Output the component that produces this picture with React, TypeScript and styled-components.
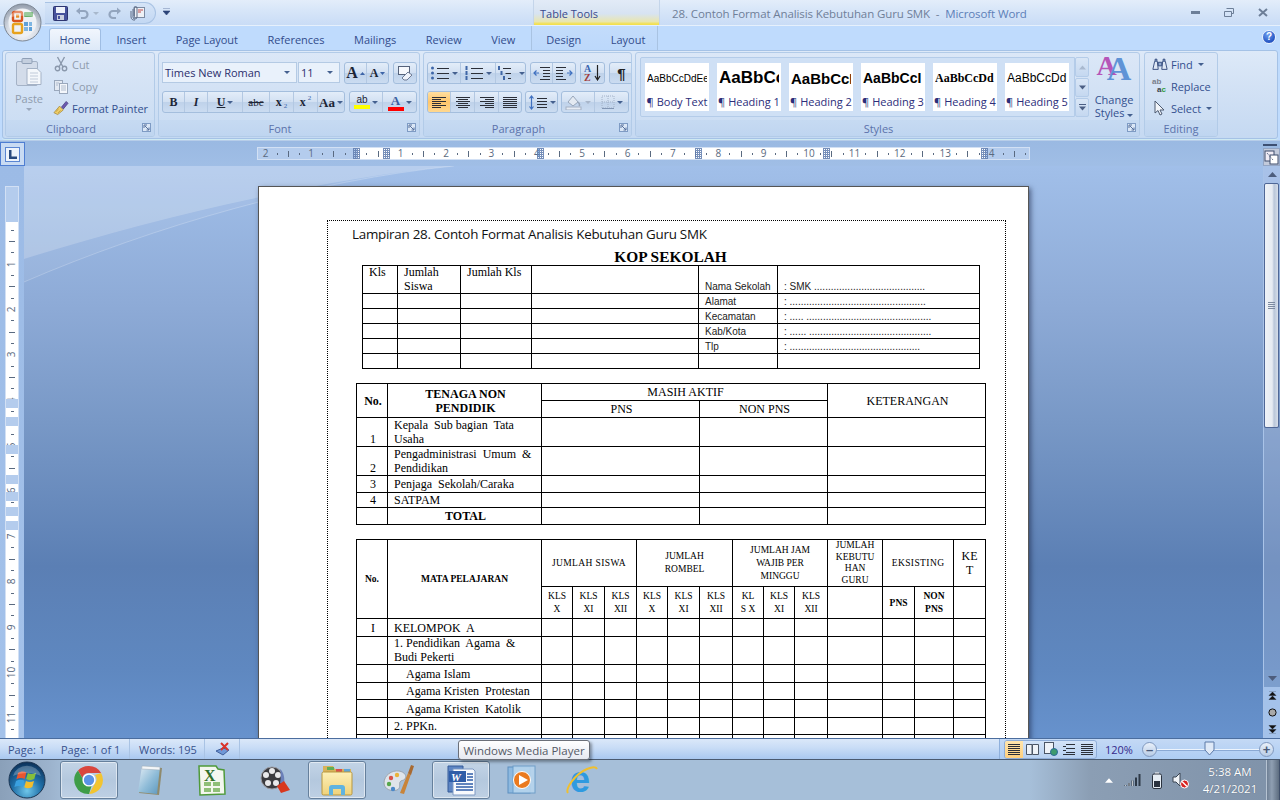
import React from "react";
import styled, { createGlobalStyle } from "styled-components";

const Global = createGlobalStyle`
  html, body { margin: 0; padding: 0; height: 100%; overflow: hidden; background: #a6bfd9; }
  #root { height: 100%; }
  * { box-sizing: border-box; }
`;

const UI = `"Open Sans", "Noto Sans", sans-serif`;
const SERIF = `"Liberation Serif", serif`;
const SANS = `"Liberation Sans", sans-serif`;

const Window = styled.div`
  position: relative; width: 1280px; height: 800px; overflow: hidden;
  display: flex; flex-direction: column; font-family: ${UI}; font-size: 11px; color: #2f4c8a;
`;

/* ---------- title bar ---------- */
const TitleBar = styled.div`
  height: 26px; flex: none; display: flex; align-items: stretch; padding-left: 45px;
  background: linear-gradient(#e3edfa, #d6e5f8 45%, #c9dcf6);
  border-bottom: 1px solid #e6f0fc;
`;
const Qat = styled.div`
  width: 111px; height: 22px; margin-top: 2px; padding-left: 8px; display: flex; align-items: center;
  background: linear-gradient(#d5e4f7, #c3d8f3); border: 1px solid #a9c3e4; border-left: 0; border-radius: 0 12px 12px 0;
`;
const Gap = styled.span<{ $w: number }>`width: ${(p) => p.$w}px; flex: none;`;
const QatMenu = styled.div`width: 14px; margin-left: 3px; padding-top: 8px; display: flex; justify-content: center;`;
const CtxHead = styled.div`
  width: 127px; margin-left: 360px; padding: 7px 0 0 6px; font-size: 11px; line-height: 14px; color: #3a4a8c;
  background: linear-gradient(#e2ebf7, #d7e3f2 55%, #e9e6b0 86%, #f3e04f 96%);
  border-left: 1px solid #c4d5ea; border-right: 1px solid #c4d5ea;
`;
const DocTitle = styled.div`
  margin-left: 12px; padding-top: 6px; font-size: 11.5px; line-height: 15px; color: #6f7f98; white-space: pre; letter-spacing: -0.1px;
`;
const AppName = styled.span`color: #5d7fb7;`;
const WinControls = styled.div`margin-left: auto; display: flex; align-items: flex-start;`;
const WinBtn = styled.div`width: 34px; height: 24px; display: flex; align-items: center; justify-content: center;`;

/* ---------- tabs ---------- */
const TabRow = styled.div`
  height: 24px; flex: none; display: flex; align-items: stretch; padding-left: 49px; background: #bfdbfd; position: relative;
`;
const Tab = styled.div<{ $active?: boolean }>`
  display: flex; align-items: center; justify-content: center; height: 22px; margin-top: 2px; white-space: nowrap; font-size: 11px; color: #324c8c;
  padding: ${(p) => (p.$active ? "0" : "0 14px")}; width: ${(p) => (p.$active ? "52px" : "auto")};
  margin-left: ${(p) => (p.$active ? "0" : "1.5px")};
  ${(p) => p.$active && `background: linear-gradient(#f1f6fd, #dde9f8); border: 1px solid #9fbde3; border-bottom: 0; border-radius: 3px 3px 0 0;`}
`;
const CtxTabs = styled.div`
  width: 127px; margin-left: 2px; display: flex; background: linear-gradient(#c3dcfb, #bcd8fb);
  border-left: 1px solid #a9c3e2; border-right: 1px solid #a9c3e2;
  & > div:first-child { margin-left: 0; }
`;
const Help = styled.div`
  position: absolute; right: 4px; top: 4px; width: 14px; height: 14px; border-radius: 50%;
  background: radial-gradient(circle at 40% 30%, #6f9ff0, #1f4fbf 75%); border: 1px solid #e8f0fc;
  color: #fff; font: bold 10px/12px ${SANS}; text-align: center;
`;

/* ---------- ribbon ---------- */
const Ribbon = styled.div`
  height: 90px; flex: none; padding: 0 2px 1px 2px; background: #bfdbfd;
`;
const RibbonPanel = styled.div`
  height: 89px; padding: 1px 2px; display: flex; gap: 3px; border: 1px solid #a5c2e6; border-radius: 3px;
  background: linear-gradient(#dde9f8, #d3e2f5 40%, #c5d9f2);
  box-shadow: 0 1px 0 #cfeaf2;
`;
const Group = styled.div<{ $w: number; $ml?: number }>`
  width: ${(p) => p.$w}px; flex: none; display: flex; flex-direction: column; border: 1px solid #b2cbe8; border-radius: 3px; overflow: hidden;
  margin-left: ${(p) => p.$ml ?? 0}px;
  background: linear-gradient(#dbe7f7, #d0e0f4 60%, #c9dcf3);
`;
const GroupBody = styled.div`
  flex: 1; position: relative; display: flex; min-height: 0;
`;
const GroupLabel = styled.div<{ $launch?: boolean }>`
  height: 16px; flex: none; position: relative; text-align: center; font-size: 11px; line-height: 15px; padding-top: 1px; color: #5b72ab; background: linear-gradient(#c6daf2, #bfd5f0);
  padding-right: ${(p) => (p.$launch ? "18px" : "0")};
`;
const Launcher = styled.svg`position: absolute; right: 3px; top: 3px; width: 9px; height: 9px;`;
const Stack = styled.div<{ $gap?: number; $pt?: number; $pl?: number }>`
  display: flex; flex-direction: column; gap: ${(p) => p.$gap ?? 0}px; padding-top: ${(p) => p.$pt ?? 0}px; padding-left: ${(p) => p.$pl ?? 0}px;
`;
const Row = styled.div<{ $gap?: number }>`display: flex; align-items: stretch; gap: ${(p) => p.$gap ?? 0}px;`;

const PasteBtn = styled.div`
  width: 46px; padding-top: 4px; display: flex; flex-direction: column; align-items: center; color: #8f9cae; font-size: 11px; line-height: 14px;
`;
const PasteLabel = styled.span`margin-top: 5px;`;
const PasteCaret = styled.span`margin-top: 2px; display: flex;`;
const SmallCmd = styled.div<{ $off?: boolean }>`
  height: 22px; display: flex; align-items: center; gap: 3px; white-space: nowrap; font-size: 11px; letter-spacing: -0.05px; color: ${(p) => (p.$off ? "#8f9cae" : "#34508f")};
`;
const CmdIcon = styled.span`width: 16px; height: 16px; display: flex; align-items: center; justify-content: center; flex: none;`;
const Caret = styled.i<{ $c?: string; $ml?: number }>`
  display: inline-block; width: 0; height: 0; flex: none; border-left: 3px solid transparent; border-right: 3px solid transparent; border-top: 3px solid ${(p) => p.$c || "#44608f"};
  margin-left: ${(p) => p.$ml ?? 0}px;
`;

const Strip = styled.div`
  height: 22px; display: flex; align-items: stretch; border: 1px solid #a4bedd; border-radius: 3px;
  background: linear-gradient(#e3edf9, #d2e0f2 48%, #bfd2ea 52%, #cbdcf1);
`;
const StripBtn = styled.div<{ $w: number; $on?: boolean }>`
  width: ${(p) => p.$w}px; flex: none; display: flex; align-items: center; justify-content: center; gap: 2px; color: #1f2a3e;
  border-right: 1px solid #b3c8e2; white-space: nowrap;
  &:last-child { border-right: 0; }
  ${(p) => p.$on && `background: linear-gradient(#ffdfa0, #ffc66b 50%, #ffd890); border-radius: 2px 0 0 2px;`}
`;
const FontBox = styled.div<{ $w: number }>`
  width: ${(p) => p.$w}px; height: 21px; display: flex; align-items: center; justify-content: space-between; padding: 0 6px 0 2px;
  background: #e9f1fb; border: 1px solid #b4cae4; font-size: 11px; color: #2b2f6c; white-space: nowrap;
`;
const Fx = styled.span<{ $size: number; $bold?: boolean; $italic?: boolean; $u?: boolean; $s?: boolean; $c?: string; $sans?: boolean; $dy?: number }>`
  font-family: ${(p) => (p.$sans ? SANS : SERIF)}; font-size: ${(p) => p.$size}px; line-height: 1; color: ${(p) => p.$c || "#1c2536"};
  font-weight: ${(p) => (p.$bold ? 700 : 400)}; font-style: ${(p) => (p.$italic ? "italic" : "normal")};
  text-decoration: ${(p) => (p.$u ? "underline" : p.$s ? "line-through" : "none")};
  transform: translateY(${(p) => p.$dy ?? 0}px);
`;
const FontColor = styled.span<{ $c: string }>`
  display: flex; flex-direction: column; align-items: center; line-height: 10px;
  &::after { content: ""; width: 16px; height: 4px; background: ${(p) => p.$c}; margin-top: 0; }
`;

const Gallery = styled.div`
  margin: 4px 0 0 4px; width: 435px; height: 60px; padding: 5px 4px; display: flex; gap: 8px;
  border: 1px solid #b4cce9; border-radius: 2px 0 0 2px; background: #cfe0f5;
`;
const Swatch = styled.div`
  width: 64px; height: 48px; flex: none; background: #fff; display: flex; flex-direction: column; align-items: center; overflow: hidden;
`;
const Sample = styled.div<{ $size: number; $bold?: boolean; $serif?: boolean }>`
  height: 30px; width: 60px; overflow: hidden; white-space: nowrap; color: #000; text-align: left; display: flex; align-items: center;
  font-family: ${(p) => (p.$serif ? SERIF : SANS)}; font-size: ${(p) => p.$size}px; font-weight: ${(p) => (p.$bold ? 700 : 400)};
`;
const SwatchName = styled.div`font-size: 11px; line-height: 18px; white-space: nowrap; color: #2c2e7a;`;
const GalleryArrows = styled.div`margin-top: 4px; width: 14px; height: 60px; display: flex; flex-direction: column; gap: 1px;`;
const GalleryArrow = styled.div<{ $h: number }>`
  height: ${(p) => p.$h}px; display: flex; align-items: center; justify-content: center; flex-direction: column; gap: 1px;
  background: linear-gradient(#d9e6f6, #c5d8f0); border: 1px solid #b4cce9; border-radius: 2px;
`;
const BarMark = styled.i`display: block; width: 7px; height: 1px; background: #4c5f84;`;
const ChangeStyles = styled.div`
  width: 50px; display: flex; flex-direction: column; align-items: center; font-size: 11px; line-height: 13px; color: #34508f; text-align: center;
`;
const ChangeLabel = styled.span`margin-top: 10px; white-space: nowrap;`;
const BigA = styled.div`
  height: 30px; padding-top: 2px; display: flex; align-items: flex-end; font-family: ${SERIF}; font-weight: 700;
  span:first-child { color: #b655b8; font-size: 28px; line-height: 26px; margin-bottom: 4px; }
  span:last-child { color: #5f93d6; font-size: 34px; line-height: 28px; margin-left: -10px; }
`;

/* ---------- rulers ---------- */
const RulerRow = styled.div`
  height: 26px; flex: none; position: relative; display: flex; align-items: flex-start; background: linear-gradient(#9ab9e2, #a0bee6);
  border-top: 1px solid #b7cde9;
`;
const TabStop = styled.div`
  margin: 1px 0 0 0; width: 25px; height: 24px; display: flex; align-items: center; justify-content: center;
  border: 1px solid #4f7ed2; background: #c9dbf3;
`;
const TabStopInner = styled.div`
  width: 15px; height: 15px; border: 1px solid #5b86d2; background: #eef4fc; display: flex; align-items: flex-end; justify-content: center; padding-bottom: 2px;
`;
const HRuler = styled.div`
  position: relative; margin: 6px 0 0 232px; width: 773px; height: 13px; display: flex; border: 1px solid #d2e0f4; background: #b4cced;
`;
const RZone = styled.div<{ $w: number; $white?: boolean; $pl: number }>`
  width: ${(p) => p.$w}px; flex: none; display: flex; align-items: center; padding-left: ${(p) => p.$pl}px; overflow: hidden;
  background: ${(p) => (p.$white ? "#fff" : "transparent")};
`;
const RCell = styled.div`
  width: 11.35px; flex: none; height: 11px; display: flex; align-items: center; justify-content: center;
  font: 10px/11px ${UI}; color: #5a6a80;
`;
const Dot = styled.i`display: block; width: 1px; height: 2px; background: #5a6a80;`;
const Tick = styled.i`display: block; width: 1px; height: 6px; background: #5a6a80;`;
const GridMark = styled.i<{ $x: number }>`
  position: absolute; top: 0; left: ${(p) => p.$x}px; width: 7px; height: 11px;
  background:
    repeating-linear-gradient(90deg, #5f7cae 0 1px, transparent 1px 2px),
    repeating-linear-gradient(0deg, #5f7cae 0 1px, transparent 1px 2px);
  opacity: .85;
`;
const SplitBar = styled.div`position: absolute; right: 3px; top: 3px; width: 14px; height: 2px; background: #3d4f72;`;
const ViewRuler = styled.div`
  position: absolute; right: 0; top: 7px; width: 17px; height: 18px; background: #c2cadb; border: 1px solid #93a5c4;
  display: flex; align-items: center; justify-content: center;
`;

/* ---------- workspace ---------- */
const Workspace = styled.div`
  height: 572px; flex: none; display: flex; overflow: hidden;
  background: linear-gradient(#a1bfe9 0%, #8daad6 25%, #7898c6 45%, #5b7fb4 70%, #5f88c0 88%, #6792cd 100%);
`;
const VRulerCol = styled.div`
  width: 24px; flex: none; padding: 20px 0 0 5px; background: linear-gradient(#9cbbe6, #a4c2ea);
`;
const VRuler = styled.div`
  position: relative; width: 14px; height: 560px; border: 1px solid #d2e0f4; border-bottom: 0; background: #b4cced; overflow: hidden;
`;
const VWhite = styled.div`
  margin-top: 35px; height: 525px; background: #fff; padding-top: 2.4px; display: flex; flex-direction: column; align-items: center;
`;
const VCell = styled.div`
  height: 11.35px; width: 12px; flex: none; display: flex; align-items: center; justify-content: center; font: 10px/11px ${UI}; color: #5a6a80;
  span { display: block; transform: rotate(-90deg); }
`;
const VDot = styled.i`display: block; width: 3px; height: 1px; background: #5a6a80;`;
const VTick = styled.i`display: block; width: 6px; height: 1px; background: #5a6a80;`;
const VBlock = styled.i<{ $y: number; $h: number }>`
  position: absolute; left: 0; right: 0; top: ${(p) => p.$y}px; height: ${(p) => p.$h}px; background: #b4cced;
`;
const DocArea = styled.div`
  position: relative; flex: 1; min-width: 0; overflow: hidden; padding: 20px 0 0 234px;
`;
const Swoosh = styled.svg`position: absolute; left: 0; top: 0; width: 600px; height: 140px; pointer-events: none;`;
const Page = styled.div`
  position: relative; width: 771px; min-height: 700px; padding: 33px 0 0 68px; background: #fff; border: 1px solid #555;
  box-shadow: 2px 2px 5px rgba(20, 30, 60, .55);
`;
const Frame = styled.div`
  width: 679px; min-height: 600px; padding-top: 4px; border: 1px dotted #000; border-bottom: 0; color: #000;
`;
const Lampiran = styled.div`
  margin-left: 24px; font-size: 13.4px; line-height: 18px; color: #111; white-space: nowrap; letter-spacing: -0.26px;
`;
const Kop = styled.div`
  padding-top: 6px; margin-left: 8px; text-align: center; font: 700 15.4px/16px ${SERIF}; color: #000;
`;
const Sheet = styled.table<{ $w: number; $ml: number; $mt?: number }>`
  table-layout: fixed; border-collapse: collapse; width: ${(p) => p.$w}px; margin-left: ${(p) => p.$ml}px; margin-top: ${(p) => p.$mt ?? 0}px;
  font: 12px/14px ${SERIF}; color: #000;
`;
const Tr = styled.tr<{ $h: number }>`height: ${(p) => p.$h}px;`;
const Td = styled.td<{ $c?: boolean; $v?: string; $size?: number; $b?: boolean; $lh?: number; $sans?: boolean; $pl?: number; $p0?: boolean; $ls?: number; $nw?: boolean }>`
  border: 1px solid #000; padding: ${(p) => (p.$p0 ? "0" : `0 4px 0 ${p.$pl ?? 6}px`)};
  text-align: ${(p) => (p.$c ? "center" : "left")};
  vertical-align: ${(p) => p.$v || "middle"};
  font-size: ${(p) => p.$size ?? 12}px; font-weight: ${(p) => (p.$b ? 700 : 400)}; line-height: ${(p) => p.$lh ?? 14}px;
  letter-spacing: ${(p) => p.$ls ?? 0}px;
  ${(p) => p.$nw && `white-space: nowrap;`}
  ${(p) => p.$sans && `font-family: ${SANS}; color: #222; white-space: nowrap;`}
`;

/* ---------- scrollbar ---------- */
const ScrollCol = styled.div`
  width: 17px; flex: none; display: flex; flex-direction: column; border-left: 1px solid #a9c3e8;
`;
const ScrollUp = styled.div`height: 17px; flex: none; display: flex; align-items: center; justify-content: center; background: rgba(190,205,230,.25);`;
const Thumb = styled.div`
  height: 245px; flex: none; margin-left: 0; width: 15px; display: flex; align-items: center; justify-content: center; flex-direction: column; gap: 1px;
  border: 1px solid #4f6796; border-radius: 2px; background: linear-gradient(90deg, #eef2f7, #e6ebf2 55%, #b9c6d9 70%, #d6dee9);
  & > i { display: block; width: 7px; height: 1px; background: #7c8aa0; }
`;
const Track = styled.div`flex: 1; background: rgba(190,205,230,.25);`;
const ScrollDown = styled.div`height: 17px; flex: none; display: flex; align-items: center; justify-content: center; background: rgba(190,205,230,.3);`;
const BrowseBox = styled.div`
  height: 51px; flex: none; background: #a4c2ea; display: flex; flex-direction: column; align-items: center; justify-content: space-around;
`;

/* ---------- status bar ---------- */
const StatusBar = styled.div`
  height: 22px; flex: none; display: flex; align-items: stretch; color: #37518c; font-size: 11px;
  background: linear-gradient(#dbe8f9, #c8dcf6 45%, #a9c8f0); border-top: 1px solid #4b6d9e; border-bottom: 1px solid #4a5a70;
`;
const StatusItem = styled.div<{ $w: number; $sep?: boolean; $pl?: number }>`
  width: ${(p) => p.$w}px; flex: none; display: flex; align-items: center; padding-left: ${(p) => p.$pl ?? 0}px; white-space: nowrap;
  ${(p) => p.$sep && `border-right: 1px solid #a9c3e4;`}
`;
const StatusRight = styled.div`
  margin-left: auto; width: 281px; display: flex; align-items: center; padding-left: 4px;
  background: linear-gradient(#c4d9f5, #aecdf3); border-left: 1px solid #8fb0dc;
`;
const ViewBtns = styled.div`
  width: 93px; height: 19px; display: flex; border: 1px solid #8fadd8; border-radius: 3px; background: linear-gradient(#d3e3f8, #b7d0f1);
`;
const ViewBtn = styled.div<{ $on?: boolean }>`
  flex: 1; display: flex; align-items: center; justify-content: center;
  ${(p) => p.$on && `background: linear-gradient(#ffe5ad, #ffcf7d); border-radius: 2px 0 0 2px;`}
`;
const ZoomPct = styled.div`width: 37px; margin-left: 8px; font-size: 11px; color: #34288a;`;
const ZoomBtn = styled.div`
  width: 15px; height: 15px; flex: none; border-radius: 50%; border: 1px solid #8098be; background: linear-gradient(#e9f0fa, #b8cce6);
  display: flex; align-items: center; justify-content: center; font: 700 13px/13px ${SANS}; color: #4a5a78;
`;
const ZoomTrack = styled.div`
  position: relative; width: 102px; height: 1px; background: #edf4fd; box-shadow: 0 1px 0 #8aa9d4;
`;
const ZoomThumb = styled.svg`position: absolute; left: 47px; top: -8px;`;

/* ---------- task bar ---------- */
const Taskbar = styled.div`
  height: 40px; flex: none; display: flex; align-items: center; padding-left: 60px; gap: 2px;
  background: linear-gradient(90deg, #8aa0b9 0, #9cb3cd 50px, #a6bfd9 70px, #a6bfd9 1030px, #8b9eb4 1090px, #7f92a9 100%);
`;
const StartOrb = styled.svg`position: absolute; left: 8px; bottom: 1px; width: 38px; height: 38px;`;
const TaskSlot = styled.div<{ $w: number; $open?: boolean }>`
  width: ${(p) => p.$w}px; height: 38px; flex: none; display: flex; align-items: center; justify-content: center; border-radius: 3px;
  ${(p) => p.$open && `background: linear-gradient(#c3d4e6, #b4c8de 50%, #bed0e4); border: 1px solid #66809c; box-shadow: inset 0 0 0 1px rgba(255,255,255,.5);`}
`;
const Tray = styled.div`margin-left: auto; height: 40px; display: flex; align-items: center;`;
const TrayIcon = styled.div<{ $w: number }>`width: ${(p) => p.$w}px; display: flex; justify-content: center; align-items: center;`;
const Clock = styled.div`
  width: 55px; margin-left: 10px; text-align: center; font-size: 11.5px; line-height: 17px; color: #fff; white-space: nowrap; text-shadow: 0 0 1px rgba(40,50,70,.6);
`;
const ShowDesk = styled.div`
  width: 14px; height: 40px; margin-left: 8.5px; background: linear-gradient(90deg, #6e7f94, #8f9fb2 40%, #5d6d80); border-left: 1px solid #b6c3d2; border-right: 1px solid #40506a;
`;
const Tip = styled.div`
  position: absolute; left: 458px; top: 740px; width: 132px; height: 20px; display: flex; align-items: center; justify-content: center;
  font-size: 11.5px; color: #555a66; white-space: nowrap; border: 1px solid #6b6f78; border-radius: 3px;
  background: linear-gradient(#fff, #e6e9f1); box-shadow: 2px 2px 3px rgba(0,0,0,.35);
`;
const Orb = styled.div`position: absolute; left: 3px; top: 3px; width: 40px; height: 40px;`;
const SortWrap = styled.span`display: flex; align-items: center; gap: 3px;`;
const SortLetters = styled.span`display: flex; flex-direction: column; line-height: 9px; font-family: ${SERIF}; font-weight: 700; font-size: 10px;`;
const SortA = styled.span`color: #3b66b0;`;
const SortZ = styled.span`color: #a13d3d;`;
const ReplaceWrap = styled.span`display: flex; flex-direction: column; width: 18px; font-family: ${SANS}; font-size: 8px; font-weight: 700; line-height: 8px;`;
const ReplaceTop = styled.span`color: #7a7f8c;`;
const ReplaceBottom = styled.span`color: #3a3f4a; padding-left: 5px;`;
const ReplaceC = styled.span`color: #2f9a3d;`;

/* ---------- icons ---------- */
const Dialog = () => (
  <Launcher viewBox="0 0 9 9">
    <rect x=".5" y=".5" width="8" height="8" fill="#dbe7f6" stroke="#7e9bc4" />
    <path d="M2 2h3M2 2v3M3 3l4 4M7 4.5V7H4.5" fill="none" stroke="#56719c" />
  </Launcher>
);
const ClipboardIcon = () => (
  <svg width="28" height="30" viewBox="0 0 28 30">
    <rect x="1.5" y="4.5" width="21" height="24" rx="1.5" fill="#d3dcea" stroke="#a4b2c6" />
    <rect x="7" y="1.5" width="10" height="5" rx="1" fill="#c4cfdf" stroke="#8f9fb6" />
    <path d="M12 11.5h10l4 4v12H12z" fill="#f4f7fb" stroke="#a4b2c6" />
    <path d="M15 16h8M15 19h8M15 22h8M15 25h8" stroke="#c0cad9" />
  </svg>
);
const ScissorsIcon = () => (
  <svg width="14" height="16" viewBox="0 0 14 16" fill="none" stroke="#8a98ac" strokeWidth="1.4">
    <circle cx="3.5" cy="12.5" r="2.2" /><circle cx="10.5" cy="12.5" r="2.2" />
    <path d="M5 11L10.5 1M9 11L3.5 1" />
  </svg>
);
const CopyIcon = () => (
  <svg width="16" height="15" viewBox="0 0 16 15">
    <rect x="1.5" y="1.5" width="8" height="10" fill="#e3e9f2" stroke="#9aa8bc" />
    <rect x="6.5" y="4.5" width="8" height="10" fill="#f4f7fb" stroke="#9aa8bc" />
    <path d="M8 7h5M8 9h5M8 11h5M3 4h3M3 6h2" stroke="#b0bccd" />
  </svg>
);
const BrushIcon = () => (
  <svg width="17" height="16" viewBox="0 0 17 16">
    <path d="M1 13l6-7 4 4-6 5z" fill="#f0cf6a" stroke="#9a7b2a" strokeWidth=".7" />
    <path d="M3 12l3-3M5 13.5l3-3" stroke="#b08c2f" strokeWidth=".7" />
    <path d="M9 7l5-6 2 2-5 6z" fill="#6d5ab0" stroke="#3e3474" strokeWidth=".7" />
  </svg>
);
const Lines = ({ rows, w = 14 }: { rows: [number, number][]; w?: number }) => (
  <svg width={w} height="13" viewBox={`0 0 ${w} 13`}>
    {rows.map(([x, l], i) => <rect key={i} x={x} y={1 + i * 2} width={l} height="1" fill="#2b2f38" />)}
  </svg>
);
const BulletIcon = ({ kind }: { kind: "b" | "n" | "m" }) => (
  <svg width="20" height="15" viewBox="0 0 20 15">
    {[2, 7, 12].map((y, i) => (
      <g key={y}>
        {kind === "b" && <circle cx="2.5" cy={y} r="1.5" fill="#3e66a8" />}
        {kind !== "b" && <rect x={kind === "m" ? 1 + i * 2.5 : 1.5} y={y - 2} width="2" height="4" fill="#3f66a6" />}
        <rect x={kind === "m" ? 6 + i * 2.5 : 7} y={y} width={kind === "m" ? 8 - i * 2.5 : 12} height="1" fill="#2b2f38" />
      </g>
    ))}
  </svg>
);
const IndentIcon = ({ flip }: { flip?: boolean }) => (
  <svg width="18" height="14" viewBox="0 0 18 14" style={flip ? { transform: "scaleX(-1)" } : undefined}>
    <path d="M6 7H1M3.5 4.5L1 7l2.5 2.5" fill="none" stroke="#3f70c0" strokeWidth="1.2" />
    <path d="M7 1.5h10M10 4.5h7M10 7.5h7M10 10.5h7M7 13.5h10" stroke="#2b2f38" strokeWidth="1" />
  </svg>
);
const SortIcon = () => (
  <SortWrap>
    <SortLetters><SortA>A</SortA><SortZ>Z</SortZ></SortLetters>
    <svg width="7" height="16" viewBox="0 0 7 16"><path d="M3.5 0v14M1 11l2.5 4L6 11" fill="none" stroke="#222" strokeWidth="1.2" /></svg>
  </SortWrap>
);
const LineSpace = () => (
  <svg width="20" height="15" viewBox="0 0 20 15">
    <path d="M3.5 1v13M1.5 3.5L3.5 1l2 2.5M1.5 11.5l2 2.5 2-2.5" fill="none" stroke="#3f70c0" strokeWidth="1.2" />
    <path d="M9 3.5h10M9 6.5h10M9 9.5h10M9 12.5h10" stroke="#2b2f38" />
  </svg>
);
const Bucket = () => (
  <svg width="18" height="16" viewBox="0 0 18 16">
    <path d="M3 8l5-6 5 6-5 4z" fill="#e4eaf2" stroke="#98a6ba" />
    <path d="M13 8c2 2 2 3 1 4" fill="none" stroke="#98a6ba" strokeWidth="1.4" />
    <rect x="1" y="13" width="15" height="3" fill="#e6ecf5" stroke="#a3b0c3" />
  </svg>
);
const BorderIcon = () => (
  <svg width="14" height="14" viewBox="0 0 14 14" fill="none">
    <path d="M1 1h12v12H1zM7 1v12M1 7h12" stroke="#a3b2c8" strokeDasharray="1 1" />
    <path d="M1 13.5h12" stroke="#8296b4" />
  </svg>
);
const Binoculars = () => (
  <svg width="18" height="15" viewBox="0 0 18 15">
    <path d="M1 13l2-9h3l1 9zM11 13l1-9h3l2 9z" fill="#dfe8f5" stroke="#2c4478" />
    <path d="M3.5 4V1.5h2V4M12.5 4V1.5h2V4M7 5h4v4H7z" fill="#8ea8d0" stroke="#2c4478" />
  </svg>
);
const ReplaceIcon = () => (
  <ReplaceWrap>
    <ReplaceTop>ab</ReplaceTop>
    <ReplaceBottom>a<ReplaceC>c</ReplaceC></ReplaceBottom>
  </ReplaceWrap>
);
const CursorIcon = () => (
  <svg width="13" height="16" viewBox="0 0 13 16"><path d="M1 1v12l3-2.5 2 4.5 2-1-2-4h4z" fill="#f2f5fa" stroke="#4d5a70" /></svg>
);
const SaveIcon = () => (
  <svg width="15" height="15" viewBox="0 0 15 15">
    <rect x=".5" y=".5" width="14" height="14" rx="1" fill="#46529c" stroke="#2d3570" />
    <rect x="3" y="1" width="9" height="6" fill="#eef2fa" />
    <rect x="4" y="9" width="7" height="5" fill="#c9cfdf" />
    <rect x="5" y="10" width="2" height="3" fill="#46529c" />
  </svg>
);
const UndoIcon = ({ flip }: { flip?: boolean }) => (
  <svg width="13" height="13" viewBox="0 0 13 13" style={flip ? { transform: "scaleX(-1)" } : undefined}>
    <path d="M3 4h5a3.5 3.5 0 0 1 0 7H5" fill="none" stroke="#93a5be" strokeWidth="2.2" />
    <path d="M0 4l4-3.5v7z" fill="#93a5be" />
  </svg>
);
const ClipDoc = () => (
  <svg width="17" height="16" viewBox="0 0 17 16">
    <rect x="6.5" y="2.5" width="10" height="10" fill="#eef1f6" stroke="#7d8ba2" />
    <path d="M10 5h5M10 7h3" stroke="#c04a4a" />
    <path d="M5 4v8a2 2 0 0 0 4 0V3a1.4 1.4 0 0 0-3 0v8" fill="none" stroke="#5e6d85" />
    <path d="M3 6v6a3.5 3.5 0 0 0 4 3" fill="none" stroke="#5e6d85" />
  </svg>
);
const OfficeOrb = () => (
  <Orb>
    <svg width="40" height="40" viewBox="0 0 40 40">
      <defs>
        <radialGradient id="orb" cx=".5" cy=".7" r=".7">
          <stop offset="0" stopColor="#fff" /><stop offset=".55" stopColor="#d8dde6" /><stop offset="1" stopColor="#8f99a8" />
        </radialGradient>
      </defs>
      <circle cx="19.5" cy="19.5" r="18.5" fill="url(#orb)" stroke="#7d8794" />
      <circle cx="19.5" cy="19.5" r="14" fill="#eef1f5" />
      <rect x="10" y="9" width="9" height="9" rx="1.5" fill="none" stroke="#d9541e" strokeWidth="2.4" />
      <rect x="13" y="11.5" width="3.2" height="3.2" fill="#e98b24" />
      <rect x="21" y="9" width="9" height="5" rx="1" fill="#4ba24f" opacity=".85" />
      <rect x="10" y="21" width="9" height="9" rx="1.5" fill="none" stroke="#e7a21d" strokeWidth="2.4" />
      <rect x="21" y="19" width="4" height="4" fill="#5fa0d8" /><rect x="26" y="19" width="3" height="4" fill="#7fb6e2" />
      <rect x="21" y="24" width="4" height="4" fill="#7fb6e2" /><rect x="26" y="24" width="3" height="4" fill="#5fa0d8" />
      <path d="M6 15a15 15 0 0 1 27 0c-6-3-21-3-27 0z" fill="#fff" opacity=".35" />
    </svg>
  </Orb>
);
const FlagOrb = () => (
  <StartOrb viewBox="0 0 38 38">
    <defs>
      <radialGradient id="st" cx=".5" cy=".8" r=".8">
        <stop offset="0" stopColor="#6fc6ea" /><stop offset=".5" stopColor="#1f6fa8" /><stop offset="1" stopColor="#0b2f57" />
      </radialGradient>
    </defs>
    <circle cx="19" cy="19" r="18" fill="url(#st)" stroke="#1c3552" />
    <path d="M10 12c3-2 6-2 8.4-.4l-1.7 6.4c-2.4-1.3-5-1.4-8.3.2z" fill="#e8562f" />
    <path d="M19.8 12c2.4 1.4 5 1.4 8.2-.2L26.3 18c-3 1.5-5.8 1.5-8.1.1z" fill="#86bf3a" />
    <path d="M8 20c3-1.6 6-1.6 8.4-.2L14.8 26c-2.5-1.5-5.2-1.5-8.4.1z" fill="#3aa0e0" />
    <path d="M18 20c2.4 1.4 5 1.4 8-.1l-1.7 6.2c-3 1.5-5.7 1.6-8 .1z" fill="#f3bd2c" />
    <path d="M5 15a14.5 14 0 0 1 28 0c-8-4-20-4-28 0z" fill="#fff" opacity=".25" />
  </StartOrb>
);
const Chrome = () => (
  <svg width="30" height="30" viewBox="0 0 30 30">
    <path d="M15 1a14 14 0 0 1 12.1 7H15a7 7 0 0 0-6.7 5L4 5.6A14 14 0 0 1 15 1z" fill="#d9463e" />
    <path d="M27.1 8A14 14 0 0 1 15 29l6-10.5A7 7 0 0 0 21 10z" fill="#f2c431" />
    <path d="M15 29A14 14 0 0 1 4 5.6l6 10.4a7 7 0 0 0 8 3.4L15 29z" fill="#3f9d48" />
    <circle cx="15" cy="15" r="6.6" fill="#fff" /><circle cx="15" cy="15" r="5.2" fill="#5a93e6" />
  </svg>
);
const Notepad = () => (
  <svg width="30" height="34" viewBox="0 0 30 34">
    <defs><linearGradient id="np" x1="0" y1="0" x2="1" y2="1"><stop offset="0" stopColor="#e4eef6" /><stop offset=".55" stopColor="#8fbcd8" /><stop offset="1" stopColor="#5c97bd" /></linearGradient></defs>
    <path d="M9 3l18 2-3 27-20-2z" fill="#8f8a6c" />
    <path d="M7 3l18 1-3 27-19-2z" fill="url(#np)" />
    <path d="M7 3l18 1-.3 3-18-1z" fill="#f4f6f8" stroke="#9aa8b4" strokeWidth=".5" />
  </svg>
);
const ExcelIcon = () => (
  <svg width="32" height="34" viewBox="0 0 32 34">
    <path d="M3 3h17l2 3 6 1 1 24-25 1z" fill="#f4f7ef" stroke="#4f9a3a" strokeWidth="1.5" />
    <rect x="8" y="19" width="7" height="4" fill="#8fbf78" /><rect x="17" y="19" width="7" height="4" fill="#8fbf78" />
    <rect x="8" y="25" width="7" height="4" fill="#8fbf78" /><rect x="17" y="25" width="7" height="4" fill="#8fbf78" />
    <text x="8" y="18" fontFamily="Liberation Serif, serif" fontWeight="700" fontSize="16" fill="#2f6f2a">X</text>
  </svg>
);
const FilmIcon = () => (
  <svg width="32" height="34" viewBox="0 0 32 34">
    <circle cx="13" cy="15" r="11" fill="#3a3a3e" stroke="#9a9aa0" />
    {[[13, 8], [7, 12], [9, 20], [17, 20], [19, 12]].map(([x, y]) => <circle key={x * y} cx={x} cy={y} r="3" fill="#e8e8ea" />)}
    <path d="M21 6c4 3 5 10 4 16l-4-2c1-5 1-9 0-14z" fill="#6a7fb8" />
    <path d="M18 23l7-5 6 9-9 3z" fill="#d8371e" />
  </svg>
);
const FolderIcon = () => (
  <svg width="34" height="32" viewBox="0 0 34 32">
    <defs><linearGradient id="fd" x1="0" y1="0" x2="0" y2="1"><stop offset="0" stopColor="#fdf0b8" /><stop offset="1" stopColor="#efd27b" /></linearGradient></defs>
    <path d="M3 2h10l2 3h16v4H3z" fill="#d8b25a" />
    <rect x="7" y="3" width="7" height="3" fill="#5fae55" /><rect x="16" y="5" width="6" height="3" fill="#d8504a" /><rect x="24" y="5" width="6" height="3" fill="#5fa6d8" />
    <rect x="2" y="8" width="30" height="23" rx="1.5" fill="url(#fd)" stroke="#b8973f" />
    <path d="M9 31v-7c0-2 1-3 3-3h10c2 0 3 1 3 3v7h-4v-6h-8v6z" fill="#5fb3e0" />
  </svg>
);
const PaintIcon = () => (
  <svg width="34" height="34" viewBox="0 0 34 34">
    <path d="M2 20c0-8 8-13 15-12 6 1 8 5 6 8-2 2-4 1-5 3-1 3 1 6-3 8-6 2-13-1-13-7z" fill="#dfe4ea" stroke="#9aa4b0" />
    <circle cx="9" cy="15" r="2.2" fill="#d9534a" /><circle cx="15" cy="12" r="2.2" fill="#e9b23a" /><circle cx="7" cy="21" r="2.2" fill="#57a64b" /><circle cx="11" cy="26" r="2.2" fill="#4a88c9" />
    <path d="M18 30l8-20 3 1-7 20z" fill="#c8843a" /><path d="M26 10l3-8 3 1-3 9z" fill="#a86a32" />
  </svg>
);
const WordIcon = () => (
  <svg width="34" height="34" viewBox="0 0 34 34">
    <path d="M4 3h15v26H4z" fill="#5e86c4" stroke="#345a98" />
    <path d="M9 6h20l2 2v24H9z" fill="#f8fafd" stroke="#7f9ac4" />
    <rect x="5" y="8" width="17" height="11" fill="#2f5da8" />
    <text x="7" y="17.5" fontFamily="Liberation Serif, serif" fontWeight="700" fontStyle="italic" fontSize="11" fill="#fff">W</text>
    <path d="M23 11h6M23 14h6M23 17h6M12 21h17M12 24h17M12 27h17" stroke="#2f5da8" strokeWidth="1.4" />
  </svg>
);
const MediaIcon = () => (
  <svg width="30" height="30" viewBox="0 0 30 30">
    <rect x="1" y="2" width="22" height="26" fill="#8db9e0" stroke="#5d8fc0" />
    <rect x="6" y="1" width="22" height="27" fill="#b7d5ee" stroke="#6a9cc8" opacity=".9" />
    <circle cx="15" cy="15" r="8.5" fill="#ea7a1f" stroke="#fff" />
    <path d="M12 10l9 5-9 5z" fill="#fff" />
  </svg>
);
const IEIcon = () => (
  <svg width="34" height="34" viewBox="0 0 34 34">
    <text x="5" y="29" fontFamily="Liberation Sans, sans-serif" fontWeight="700" fontSize="36" fill="#2f9ae0">e</text>
    <path d="M3 30C0 26 10 11 22 6c5-2 9-2 10 0" fill="none" stroke="#f0bf2f" strokeWidth="2" />
  </svg>
);
const SignalIcon = () => (
  <svg width="18" height="14" viewBox="0 0 18 14" fill="none" stroke="#fff">
    <path d="M1.5 12v1M5 10v3M8.5 7.5V13M12 4.5V13M15.5 1v12" stroke="#2e3a48" strokeWidth="2" />
    <path d="M1.5 12v1M5 10v3M8.5 7.5V13" stroke="#fff" strokeWidth="1" opacity=".7" />
  </svg>
);
const BatteryIcon = () => (
  <svg width="10" height="17" viewBox="0 0 10 17"><rect x="3" y=".5" width="4" height="2" fill="#fff" /><rect x=".5" y="2" width="9" height="14.5" rx="1.5" fill="#e6edf4" stroke="#2a3340" /><rect x="2" y="9" width="6" height="6" fill="#2a3340" /></svg>
);
const SpeakerIcon = () => (
  <svg width="17" height="17" viewBox="0 0 17 17">
    <path d="M1 5h3l4-4v13l-4-4H1z" fill="#f1f4f8" stroke="#3a4552" />
    <circle cx="12.5" cy="12" r="4" fill="#d8201e" stroke="#fff" /><path d="M10 9.6l5 5" stroke="#fff" strokeWidth="1.4" />
  </svg>
);
const TabL = () => <svg width="9" height="9" viewBox="0 0 9 9"><path d="M1 0h2.5v6.5H9V9H1z" fill="#294a7e" /></svg>;
const Tri = ({ up, c = "#4c5f84", w = 9 }: { up?: boolean; c?: string; w?: number }) => (
  <svg width={w} height="5" viewBox="0 0 9 5"><path d={up ? "M4.5 0L9 5H0z" : "M0 0h9L4.5 5z"} fill={c} /></svg>
);
const DoubleArrow = ({ up }: { up?: boolean }) => (
  <svg width="9" height="9" viewBox="0 0 9 9"><path d={up ? "M1 0h7M4.5 1L8 4.5H1zM4.5 5L8 8.5H1z" : "M4.5 8L1 4.5h7zM4.5 4L1 .5h7zM1 9h7"} fill="#111" stroke="#111" strokeWidth=".4" /></svg>
);
const RoundDot = () => <svg width="9" height="9" viewBox="0 0 9 9"><circle cx="4.5" cy="4.5" r="3.6" fill="#a9a9a9" stroke="#111" strokeWidth="1" /></svg>;

type Mark = "d" | "t" | string;
const rulerMarks = (from: number, to: number): Mark[] => {
  const out: Mark[] = [];
  for (let i = from; i <= to; i++) { out.push("d", "t", "d"); if (i < to) out.push(String(i)); }
  return out;
};
const HMark = ({ m }: { m: Mark }) => <RCell>{m === "d" ? <Dot /> : m === "t" ? <Tick /> : m}</RCell>;
const VMark = ({ m }: { m: Mark }) => <VCell>{m === "d" ? <VDot /> : m === "t" ? <VTick /> : <span>{m}</span>}</VCell>;

const vBlocks: [number, number][] = [[212, 9], [230, 9], [258, 9], [288, 9], [305, 9], [320, 9], [334, 9]];
const gridXs = [95, 125, 279, 437, 565, 723];
const dots = (n: number) => ".".repeat(n);
const kopRows: [string, string][] = [
  ["Alamat", `: ${dots(49)}`],
  ["Kecamatan", `: ..... ${dots(45)}`],
  ["Kab/Kota", `: ...... ${dots(44)}`],
  ["Tlp", `: ${dots(47)}`],
];
const EmptyCells = ({ n }: { n: number }) => <>{Array.from({ length: n }).map((_, i) => <Td key={i} />)}</>;

export default function App() {
  return (
    <Window>
      <Global />
      <TitleBar>
        <Qat>
          <SaveIcon /><Gap $w={8} />
          <UndoIcon /><Gap $w={4} /><Caret $c="#a8b8cc" /><Gap $w={9} />
          <UndoIcon flip /><Gap $w={7} />
          <ClipDoc />
        </Qat>
        <QatMenu><svg width="7" height="7" viewBox="0 0 7 7"><path d="M0 0h7M0 3h7L3.5 7z" fill="#2c4478" stroke="#2c4478" strokeWidth=".6" /></svg></QatMenu>
        <CtxHead>Table Tools</CtxHead>
        <DocTitle>28. Contoh Format Analisis Kebutuhan Guru SMK  -  <AppName>Microsoft Word</AppName></DocTitle>
        <WinControls>
          <WinBtn><svg width="9" height="3"><rect width="9" height="3" fill="#6d7f98" /></svg></WinBtn>
          <WinBtn><svg width="10" height="9" viewBox="0 0 10 9" fill="none" stroke="#6d7f98"><path d="M2.5.5h7v5h-2M.5 3.5h7v5h-7z" /></svg></WinBtn>
          <WinBtn><svg width="10" height="9" viewBox="0 0 10 9"><path d="M1 1l8 7M9 1L1 8" stroke="#6d7f98" strokeWidth="2" /></svg></WinBtn>
        </WinControls>
      </TitleBar>

      <TabRow>
        <Tab $active>Home</Tab>
        <Tab>Insert</Tab><Tab>Page Layout</Tab><Tab>References</Tab><Tab>Mailings</Tab><Tab>Review</Tab><Tab>View</Tab>
        <CtxTabs><Tab>Design</Tab><Tab>Layout</Tab></CtxTabs>
        <Help>?</Help>
      </TabRow>

      <Ribbon>
        <RibbonPanel>
          <Group $w={150}>
            <GroupBody>
              <PasteBtn><ClipboardIcon /><PasteLabel>Paste</PasteLabel><PasteCaret><Caret $c="#9aa8bc" /></PasteCaret></PasteBtn>
              <Stack $pt={0} $pl={1}>
                <SmallCmd $off><CmdIcon><ScissorsIcon /></CmdIcon>Cut</SmallCmd>
                <SmallCmd $off><CmdIcon><CopyIcon /></CmdIcon>Copy</SmallCmd>
                <SmallCmd><CmdIcon><BrushIcon /></CmdIcon>Format Painter</SmallCmd>
              </Stack>
            </GroupBody>
            <GroupLabel $launch>Clipboard<Dialog /></GroupLabel>
          </Group>

          <Group $w={262}>
            <GroupBody>
              <Stack $pt={9} $pl={3} $gap={7}>
                <Row $gap={4}>
                  <Row $gap={1}>
                    <FontBox $w={135}>Times New Roman<Caret /></FontBox>
                    <FontBox $w={42}>11<Caret /></FontBox>
                  </Row>
                  <Strip>
                    <StripBtn $w={22}><Fx $size={16} $bold>A</Fx><Tri up w={5} c="#3d64a8" /></StripBtn>
                    <StripBtn $w={21}><Fx $size={12} $bold>A</Fx><Tri w={5} c="#3d64a8" /></StripBtn>
                  </Strip>
                  <Strip><StripBtn $w={22}><svg width="16" height="16" viewBox="0 0 16 16"><rect x="1.5" y="1.5" width="11" height="8" fill="#f6f8fc" stroke="#55627a" /><path d="M5 13l6-6 4 3-5 5H7z" fill="#eef2fa" stroke="#6d7b94" /></svg></StripBtn></Strip>
                </Row>
                <Row $gap={4}>
                  <Strip>
                    <StripBtn $w={22}><Fx $size={12} $bold>B</Fx></StripBtn>
                    <StripBtn $w={23}><Fx $size={12} $italic $bold>I</Fx></StripBtn>
                    <StripBtn $w={35}><Fx $size={12} $bold $u>U</Fx><Caret /></StripBtn>
                    <StripBtn $w={27}><Fx $size={11} $s>abc</Fx></StripBtn>
                    <StripBtn $w={24}><Fx $size={12} $bold>x</Fx><Fx $size={7} $c="#3d64a8" $dy={4}>2</Fx></StripBtn>
                    <StripBtn $w={24}><Fx $size={12} $bold>x</Fx><Fx $size={7} $c="#3d64a8" $dy={-4}>2</Fx></StripBtn>
                    <StripBtn $w={26}><Fx $size={13} $bold>Aa</Fx><Caret /></StripBtn>
                  </Strip>
                  <Strip>
                    <StripBtn $w={33}><FontColor $c="#ffff00"><Fx $size={10} $sans>ab</Fx></FontColor><Caret /></StripBtn>
                    <StripBtn $w={33}><FontColor $c="#ff0000"><Fx $size={13} $bold $c="#3a5ea0">A</Fx></FontColor><Caret /></StripBtn>
                  </Strip>
                </Row>
              </Stack>
            </GroupBody>
            <GroupLabel $launch>Font<Dialog /></GroupLabel>
          </Group>

          <Group $w={209}>
            <GroupBody>
              <Stack $pt={9} $pl={3} $gap={7}>
                <Row $gap={4}>
                  <Strip>
                    <StripBtn $w={33}><BulletIcon kind="b" /><Caret /></StripBtn>
                    <StripBtn $w={35}><BulletIcon kind="n" /><Caret /></StripBtn>
                    <StripBtn $w={29}><BulletIcon kind="m" /><Caret /></StripBtn>
                  </Strip>
                  <Strip>
                    <StripBtn $w={22}><IndentIcon /></StripBtn>
                    <StripBtn $w={22}><IndentIcon flip /></StripBtn>
                  </Strip>
                  <Strip><StripBtn $w={23}><SortIcon /></StripBtn></Strip>
                  <Strip><StripBtn $w={23}><Fx $size={15} $bold $sans $c="#222">¶</Fx></StripBtn></Strip>
                </Row>
                <Row $gap={3}>
                  <Strip>
                    <StripBtn $w={23} $on><Lines rows={[[0, 14], [0, 9], [0, 14], [0, 9], [0, 14], [0, 9]]} /></StripBtn>
                    <StripBtn $w={24}><Lines rows={[[0, 14], [2, 10], [0, 14], [2, 10], [0, 14], [2, 10]]} /></StripBtn>
                    <StripBtn $w={24}><Lines rows={[[0, 14], [5, 9], [0, 14], [5, 9], [0, 14], [5, 9]]} /></StripBtn>
                    <StripBtn $w={22}><Lines rows={[[0, 14], [0, 14], [0, 14], [0, 14], [0, 14], [0, 14]]} /></StripBtn>
                  </Strip>
                  <Strip><StripBtn $w={31}><LineSpace /><Caret /></StripBtn></Strip>
                  <Strip>
                    <StripBtn $w={33}><Bucket /><Caret $c="#a8b6ca" /></StripBtn>
                    <StripBtn $w={33}><BorderIcon /><Caret /></StripBtn>
                  </Strip>
                </Row>
              </Stack>
            </GroupBody>
            <GroupLabel $launch>Paragraph<Dialog /></GroupLabel>
          </Group>

          <Group $w={505}>
            <GroupBody>
              <Gallery>
                <Swatch><Sample $size={10}>AaBbCcDdEe</Sample><SwatchName>¶ Body Text</SwatchName></Swatch>
                <Swatch><Sample $size={17} $bold>AaBbCc</Sample><SwatchName>¶ Heading 1</SwatchName></Swatch>
                <Swatch><Sample $size={15} $bold>AaBbCcI</Sample><SwatchName>¶ Heading 2</SwatchName></Swatch>
                <Swatch><Sample $size={14} $bold>AaBbCcI</Sample><SwatchName>¶ Heading 3</SwatchName></Swatch>
                <Swatch><Sample $size={12} $bold $serif>AaBbCcDd</Sample><SwatchName>¶ Heading 4</SwatchName></Swatch>
                <Swatch><Sample $size={12}>AaBbCcDd</Sample><SwatchName>¶ Heading 5</SwatchName></Swatch>
              </Gallery>
              <GalleryArrows>
                <GalleryArrow $h={20}><Tri up w={7} c="#a9b9cf" /></GalleryArrow>
                <GalleryArrow $h={19}><Tri w={7} /></GalleryArrow>
                <GalleryArrow $h={19}><BarMark /><Tri w={7} /></GalleryArrow>
              </GalleryArrows>
              <ChangeStyles>
                <BigA><span>A</span><span>A</span></BigA>
                <ChangeLabel>Change<br />Styles <Caret /></ChangeLabel>
              </ChangeStyles>
            </GroupBody>
            <GroupLabel $launch>Styles<Dialog /></GroupLabel>
          </Group>

          <Group $w={74} $ml={1}>
            <GroupBody>
              <Stack $pt={0} $pl={7}>
                <SmallCmd><CmdIcon><Binoculars /></CmdIcon>Find <Caret $ml={2} /></SmallCmd>
                <SmallCmd><CmdIcon><ReplaceIcon /></CmdIcon>Replace</SmallCmd>
                <SmallCmd><CmdIcon><CursorIcon /></CmdIcon>Select <Caret $ml={2} /></SmallCmd>
              </Stack>
            </GroupBody>
            <GroupLabel>Editing</GroupLabel>
          </Group>
        </RibbonPanel>
      </Ribbon>

      <RulerRow>
        <TabStop><TabStopInner><TabL /></TabStopInner></TabStop>
        <HRuler>
          <RZone $w={99} $pl={2}>
            {["2", "d", "t", "d", "1", "d", "t", "d"].map((m, i) => <HMark key={i} m={m} />)}
          </RZone>
          <RZone $w={628} $white $pl={4}>
            {rulerMarks(1, 14).map((m, i) => <HMark key={i} m={m} />)}
          </RZone>
          <RZone $w={44} $pl={1}>
            {["4", "d", "t", "d"].map((m, i) => <HMark key={i} m={m} />)}
          </RZone>
          {gridXs.map((x) => <GridMark key={x} $x={x} />)}
        </HRuler>
        <SplitBar />
        <ViewRuler>
          <svg width="15" height="15" viewBox="0 0 15 15"><rect x="1" y="1" width="9" height="10" fill="#f0ecf5" stroke="#3c4c6c" /><rect x="6" y="5" width="8" height="9" fill="#fff" stroke="#3c4c6c" /><path d="M3 3l6 7" stroke="#3c4c6c" strokeDasharray="1 1" /></svg>
        </ViewRuler>
      </RulerRow>

      <Workspace>
        <VRulerCol>
          <VRuler>
            <VWhite>
              {rulerMarks(1, 12).map((m, i) => <VMark key={i} m={m} />)}
            </VWhite>
            {vBlocks.map(([y, h]) => <VBlock key={y} $y={y} $h={h} />)}
          </VRuler>
        </VRulerCol>
        <DocArea>
          <Swoosh viewBox="0 0 600 140">
            <path d="M0 0H430C300 12 130 52 0 93Z" fill="#fff" opacity=".2" />
            <path d="M0 0H430C290 14 130 60 0 116Z" fill="#fff" opacity=".07" />
            <path d="M430 0C290 14 130 60 0 116" fill="none" stroke="#fff" strokeOpacity=".22" />
          </Swoosh>
          <Page>
            <Frame>
              <Lampiran>Lampiran 28. Contoh Format Analisis Kebutuhan Guru SMK</Lampiran>
              <Kop>KOP SEKOLAH</Kop>
              <Sheet $w={617} $ml={34}>
                <colgroup>
                  {[35, 63, 71, 167, 79, 202].map((w, i) => <col key={i} width={w} />)}
                </colgroup>
                <tbody>
                  <Tr $h={28}>
                    <Td $v="top" $lh={13.5}>Kls</Td><Td $v="top" $lh={13.5}>Jumlah Siswa</Td><Td $v="top" $lh={13.5}>Jumlah Kls</Td><Td />
                    <Td $v="bottom" $sans $size={10} $lh={13}>Nama Sekolah</Td>
                    <Td $v="bottom" $sans $size={10} $lh={13}>: SMK {dots(40)}</Td>
                  </Tr>
                  {kopRows.map(([a, b]) => (
                    <Tr $h={15} key={a}>
                      <Td /><Td /><Td /><Td />
                      <Td $sans $size={10} $lh={13}>{a}</Td>
                      <Td $sans $size={10} $lh={13}>{b}</Td>
                    </Tr>
                  ))}
                  <Tr $h={15}><Td /><Td /><Td /><Td /><Td /><Td /></Tr>
                </tbody>
              </Sheet>

              <Sheet $w={629} $ml={28} $mt={14}>
                <colgroup>{[31, 154, 158, 128, 158].map((w, i) => <col key={i} width={w} />)}</colgroup>
                <tbody>
                  <Tr $h={17}>
                    <Td rowSpan={2} $c $b>No.</Td>
                    <Td rowSpan={2} $c $b>TENAGA NON PENDIDIK</Td>
                    <Td colSpan={2} $c>MASIH AKTIF</Td>
                    <Td rowSpan={2} $c>KETERANGAN</Td>
                  </Tr>
                  <Tr $h={17}><Td $c>PNS</Td><Td $c>NON PNS</Td></Tr>
                  <Tr $h={29}><Td $c $v="bottom">1</Td><Td $nw>Kepala&nbsp; Sub bagian&nbsp; Tata<br />Usaha</Td><Td /><Td /><Td /></Tr>
                  <Tr $h={29}><Td $c $v="bottom">2</Td><Td $nw>Pengadministrasi&nbsp;&nbsp;Umum&nbsp;&nbsp;&amp;<br />Pendidikan</Td><Td /><Td /><Td /></Tr>
                  <Tr $h={17}><Td $c>3</Td><Td $nw>Penjaga&nbsp; Sekolah/Caraka</Td><Td /><Td /><Td /></Tr>
                  <Tr $h={15}><Td $c>4</Td><Td>SATPAM</Td><Td /><Td /><Td /></Tr>
                  <Tr $h={17}><Td /><Td $c $b>TOTAL</Td><Td /><Td /><Td /></Tr>
                </tbody>
              </Sheet>

              <Sheet $w={629} $ml={28} $mt={14}>
                <colgroup>{[31, 154, 31, 32, 32, 31, 32, 33, 31, 31, 33, 55, 32, 39, 32].map((w, i) => <col key={i} width={w} />)}</colgroup>
                <tbody>
                  <Tr $h={47}>
                    <Td rowSpan={2} $c $b $size={9.5} $p0>No.</Td>
                    <Td rowSpan={2} $c $b $size={9.5} $p0>MATA PELAJARAN</Td>
                    <Td colSpan={3} $c $size={9.5} $lh={13} $p0 $ls={0.4}>JUMLAH SISWA</Td>
                    <Td colSpan={3} $c $size={9.5} $lh={13} $p0>JUMLAH<br />ROMBEL</Td>
                    <Td colSpan={3} $c $size={9.5} $lh={13} $p0>JUMLAH JAM<br />WAJIB PER<br />MINGGU</Td>
                    <Td $c $size={9.5} $lh={11.5} $p0>JUMLAH<br />KEBUTU<br />HAN<br />GURU</Td>
                    <Td colSpan={2} $c $size={9.5} $lh={13} $p0 $ls={0.4}>EKSISTING</Td>
                    <Td $c $p0>KE<br />T</Td>
                  </Tr>
                  <Tr $h={32}>
                    {["KLS<X", "KLS<XI", "KLS<XII", "KLS<X", "KLS<XI", "KLS<XII", "KL<S X", "KLS<XI", "KLS<XII"].map((t, i) => {
                      const [a, b] = t.split("<");
                      return <Td key={i} $c $size={9.5} $lh={13} $p0>{a}<br />{b}</Td>;
                    })}
                    <Td />
                    <Td $c $b $size={9.5} $p0>PNS</Td>
                    <Td $c $b $size={9.5} $lh={13} $p0>NON<br />PNS</Td>
                    <Td />
                  </Tr>
                  <Tr $h={18}><Td $c>I</Td><Td>KELOMPOK&nbsp; A</Td><EmptyCells n={13} /></Tr>
                  <Tr $h={28}><Td /><Td $lh={13.5} $nw>1. Pendidikan&nbsp; Agama&nbsp; &amp;<br />Budi Pekerti</Td><EmptyCells n={13} /></Tr>
                  <Tr $h={18}><Td /><Td $pl={18}>Agama Islam</Td><EmptyCells n={13} /></Tr>
                  <Tr $h={17}><Td /><Td $pl={18} $nw>Agama Kristen&nbsp; Protestan</Td><EmptyCells n={13} /></Tr>
                  <Tr $h={18}><Td /><Td $pl={18} $nw>Agama Kristen&nbsp; Katolik</Td><EmptyCells n={13} /></Tr>
                  <Tr $h={17}><Td /><Td>2. PPKn.</Td><EmptyCells n={13} /></Tr>
                  <Tr $h={18}><Td /><Td /><EmptyCells n={13} /></Tr>
                </tbody>
              </Sheet>
            </Frame>
          </Page>
        </DocArea>
        <ScrollCol>
          <ScrollUp><Tri up c="#4d5d7c" /></ScrollUp>
          <Thumb><i /><i /><i /><i /></Thumb>
          <Track />
          <ScrollDown><Tri c="#4d5d7c" /></ScrollDown>
          <BrowseBox><DoubleArrow up /><RoundDot /><DoubleArrow /></BrowseBox>
        </ScrollCol>
      </Workspace>

      <StatusBar>
        <StatusItem $w={50} $pl={8}>Page: 1</StatusItem>
        <StatusItem $w={80} $pl={11} $sep>Page: 1 of 1</StatusItem>
        <StatusItem $w={75} $pl={9} $sep>Words: 195</StatusItem>
        <StatusItem $w={35} $pl={10} $sep>
          <svg width="16" height="15" viewBox="0 0 16 15"><path d="M1 9l7-3 6 2-6 5z" fill="#6f97d6" stroke="#3f5f9c" /><path d="M6 1l7 7M13 1L6 8" stroke="#d9322a" strokeWidth="2" /></svg>
        </StatusItem>
        <StatusRight>
          <ViewBtns>
            <ViewBtn $on><Lines w={12} rows={[[0, 12], [0, 12], [0, 12], [0, 12], [0, 12], [0, 12]]} /></ViewBtn>
            <ViewBtn><svg width="13" height="13" viewBox="0 0 13 13" fill="#eef2f8" stroke="#4b5566"><path d="M.5 1.5h5.5v10H.5zM6.5 1.5h6v10h-6z" /></svg></ViewBtn>
            <ViewBtn><svg width="14" height="14" viewBox="0 0 14 14"><rect x=".5" y=".5" width="9" height="11" fill="#eef2f8" stroke="#4b5566" /><circle cx="10" cy="10" r="3.5" fill="#3d9a6e" stroke="#2a6a9a" /></svg></ViewBtn>
            <ViewBtn><Lines w={12} rows={[[3, 9], [0, 3], [3, 9], [0, 3], [3, 9], [0, 12]]} /></ViewBtn>
            <ViewBtn><Lines w={12} rows={[[0, 12], [0, 12], [0, 12], [0, 12], [0, 12], [0, 12]]} /></ViewBtn>
          </ViewBtns>
          <ZoomPct>120%</ZoomPct>
          <ZoomBtn>–</ZoomBtn>
          <ZoomTrack>
            <ZoomThumb width="11" height="15" viewBox="0 0 11 15"><path d="M1 1h9v8l-4.5 5L1 9z" fill="#dfe9f7" stroke="#5d7aa8" /></ZoomThumb>
          </ZoomTrack>
          <ZoomBtn>+</ZoomBtn>
        </StatusRight>
      </StatusBar>

      <Taskbar>
        <TaskSlot $w={58} $open><Chrome /></TaskSlot>
        <TaskSlot $w={60}><Notepad /></TaskSlot>
        <TaskSlot $w={60}><ExcelIcon /></TaskSlot>
        <TaskSlot $w={62}><FilmIcon /></TaskSlot>
        <TaskSlot $w={58} $open><FolderIcon /></TaskSlot>
        <TaskSlot $w={62}><PaintIcon /></TaskSlot>
        <TaskSlot $w={58} $open><WordIcon /></TaskSlot>
        <TaskSlot $w={60}><MediaIcon /></TaskSlot>
        <TaskSlot $w={56}><IEIcon /></TaskSlot>
        <Tray>
          <TrayIcon $w={24}><Tri up c="#fff" w={8} /></TrayIcon>
          <TrayIcon $w={24}><SignalIcon /></TrayIcon>
          <TrayIcon $w={24}><BatteryIcon /></TrayIcon>
          <TrayIcon $w={24}><SpeakerIcon /></TrayIcon>
          <Clock>5:38 AM<br />4/21/2021</Clock>
          <ShowDesk />
        </Tray>
      </Taskbar>

      <FlagOrb />
      <OfficeOrb />
      <Tip>Windows Media Player</Tip>
    </Window>
  );
}
